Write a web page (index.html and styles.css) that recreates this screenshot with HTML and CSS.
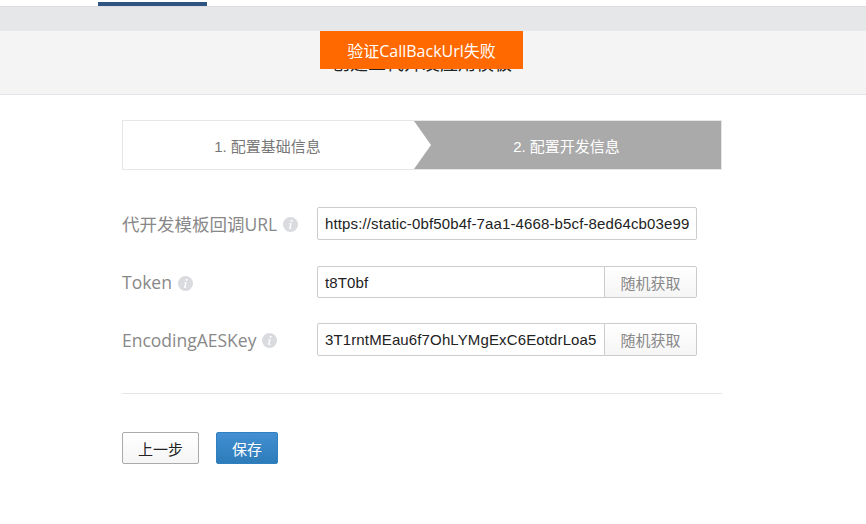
FILE: index.html
```html
<!DOCTYPE html>
<html lang="zh">
<head>
<meta charset="utf-8">
<title>配置开发信息</title>
<link rel="stylesheet" href="styles.css">
</head>
<body>
<header class="topbar"><span class="active-tab"></span></header>
<div class="band"></div>
<section class="title-panel">
  <h1 class="title">创建二代开发应用模板</h1>
  <div class="toast">验证CallBackUrl失败</div>
</section>
<main class="content">
  <div class="steps">
    <div class="step step-done">1. 配置基础信息</div>
    <div class="step step-current">2. 配置开发信息</div>
    <svg class="chevron" viewBox="0 0 17 48" width="17" height="48" aria-hidden="true"><path d="M0 0L17 24L0 48Z" fill="#fff"/></svg>
  </div>
  <form class="form">
    <div class="row row-url">
      <label class="label">代开发模板回调URL <svg class="info" viewBox="0 0 15 15"><circle cx="7.5" cy="7.5" r="7.5" fill="#d9dbde"/><path d="M8.6 2.8a1 1 0 1 1-.1 0ZM6.2 6.2h2.4L7.7 10.7q-.1.7.8.3l-.2.7q-2.4 1-2.1-.9L7 7q-.2-.3-.9-.2Z" fill="#fff"/></svg></label>
      <div class="field"><input class="input solo" value="https://static-0bf50b4f-7aa1-4668-b5cf-8ed64cb03e99."></div>
    </div>
    <div class="row row-token">
      <label class="label">Token <svg class="info" viewBox="0 0 15 15"><circle cx="7.5" cy="7.5" r="7.5" fill="#d9dbde"/><path d="M8.6 2.8a1 1 0 1 1-.1 0ZM6.2 6.2h2.4L7.7 10.7q-.1.7.8.3l-.2.7q-2.4 1-2.1-.9L7 7q-.2-.3-.9-.2Z" fill="#fff"/></svg></label>
      <div class="field"><input class="input" value="t8T0bf"><button type="button" class="addon">随机获取</button></div>
    </div>
    <div class="row row-key">
      <label class="label">EncodingAESKey <svg class="info" viewBox="0 0 15 15"><circle cx="7.5" cy="7.5" r="7.5" fill="#d9dbde"/><path d="M8.6 2.8a1 1 0 1 1-.1 0ZM6.2 6.2h2.4L7.7 10.7q-.1.7.8.3l-.2.7q-2.4 1-2.1-.9L7 7q-.2-.3-.9-.2Z" fill="#fff"/></svg></label>
      <div class="field"><input class="input" value="3T1rntMEau6f7OhLYMgExC6EotdrLoa57abcdefghij"><button type="button" class="addon">随机获取</button></div>
    </div>
  </form>
  <div class="actions">
    <button type="button" class="btn btn-default">上一步</button>
    <button type="button" class="btn btn-primary">保存</button>
  </div>
</main>
</body>
</html>
```
FILE: styles.css
```css
* { box-sizing: border-box; }
html, body { margin: 0; padding: 0; }
body {
  width: 866px;
  height: 524px;
  overflow: hidden;
  background: #fff;
  font-family: "Liberation Sans", "Noto Sans CJK SC", sans-serif;
}
.topbar { height: 6px; padding-left: 98px; background: #fff; }
.active-tab { display: block; width: 109px; height: 4px; position: relative; top: 2px; background: #2f5583; }
.band { height: 25px; background: #e6e7e9; border-top: 1px solid #dcdde0; }
.title-panel {
  position: relative;
  height: 64px;
  padding-right: 22px;
  background: #f4f4f4;
  border-bottom: 1px solid #dfe3e8;
  display: flex;
  justify-content: center;
  align-items: flex-start;
}
.title { margin: 21px 0 0; font-size: 18px; line-height: 24px; font-weight: 400; color: #222; }
.toast {
  position: absolute;
  left: 320px;
  top: 0;
  width: 203px;
  height: 38px;
  padding-top: 2px;
  background: #ff6900;
  color: #fff;
  font-family: "Open Sans", "Noto Sans CJK SC", sans-serif;
  font-size: 16px;
  line-height: 36px;
  text-align: center;
}
.content { width: 600px; margin: 25px 0 0 122px; }
.steps { position: relative; display: flex; height: 50px; border: 1px solid #e6e6e6; font-size: 15px; }
.step { flex: 1; display: flex; align-items: center; justify-content: center; }
.step-done { width: 291px; flex: none; padding-right: 2px; color: #777; background: #fff; }
.step-current { padding-right: 2px; color: #fff; background: #aaa; }
.chevron { position: absolute; left: 291px; top: 0; }
.form { margin-top: 37px; }
.row { display: flex; align-items: center; height: 33px; }
.row-url { margin-bottom: 26px; }
.row-token { height: 32px; margin-bottom: 25px; }
.row-key { margin-bottom: 37px; }
.label {
  width: 195px;
  color: #888;
  font-family: "Open Sans", "Noto Sans CJK SC", sans-serif;
  font-size: 17.5px;
  display: flex;
  align-items: center;
  gap: 6px;
  white-space: nowrap;
}
.info { width: 15px; height: 15px; flex: none; margin-top: 2px; }
.field { display: flex; width: 380px; height: 100%; }
.input {
  flex: 1;
  min-width: 0;
  height: 100%;
  padding: 0 7px;
  border: 1px solid #ccc;
  border-radius: 2px 0 0 2px;
  font: 15px "Liberation Sans", "Noto Sans CJK SC", sans-serif;
  letter-spacing: .13px;
  color: #222;
  background: #fff;
  outline: none;
}
.input.solo { border-radius: 2px; }
.addon {
  width: 93px;
  height: 100%;
  margin-left: -1px;
  border: 1px solid #ccc;
  border-radius: 0 2px 2px 0;
  background: linear-gradient(#fff, #f5f5f5);
  color: #888;
  font: 15px "Liberation Sans", "Noto Sans CJK SC", sans-serif;
  padding: 0;
}
.actions { padding-top: 38px; border-top: 1px solid #e6e6e6; display: flex; gap: 17px; }
.btn { height: 32px; border-radius: 2px; font: 15px "Liberation Sans", "Noto Sans CJK SC", sans-serif; padding: 0; }
.btn-default { width: 77px; border: 1px solid #aaa; background: linear-gradient(#fff, #f5f5f5); color: #222; }
.btn-primary { width: 62px; border: 1px solid #2f80c0; background: linear-gradient(#438fd2, #2d7cb9); color: #fff; }
```
